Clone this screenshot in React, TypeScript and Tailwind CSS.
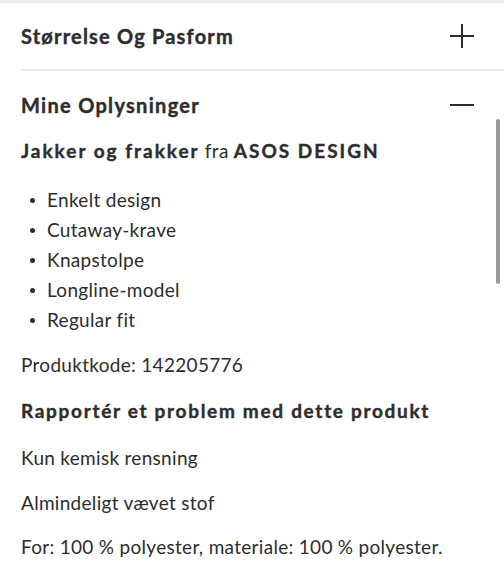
import React from 'react';

const bullets = ['Enkelt design', 'Cutaway-krave', 'Knapstolpe', 'Longline-model', 'Regular fit'];

function PlusIcon() {
  return (
    <svg width="24" height="24" viewBox="0 0 24 24" className="text-[#2d2d2d]">
      <path d="M0 12h24M12 0v24" stroke="currentColor" strokeWidth="2" />
    </svg>
  );
}

function MinusIcon() {
  return (
    <svg width="24" height="24" viewBox="0 0 24 24" className="text-[#2d2d2d]">
      <path d="M0 12h24" stroke="currentColor" strokeWidth="2" />
    </svg>
  );
}

export default function App() {
  return (
    <div className="relative w-[504px] h-[575px] overflow-hidden bg-white text-[#2d2d2d] font-['Lato',sans-serif]">
      <div className="h-[3px] bg-[#eeeeee]" />
      <div className="pl-[21px]">
        <div className="flex h-[68px] items-center justify-between border-b-2 border-[#eeeeee] pr-[30px]">
          <h2 className="text-[20px] font-bold tracking-[1.2px] [-webkit-text-stroke:0.4px]">Størrelse Og Pasform</h2>
          <PlusIcon />
        </div>
        <div className="flex h-[68px] items-center justify-between pr-[30px]">
          <h2 className="text-[20px] font-bold tracking-[1.3px] [-webkit-text-stroke:0.4px]">Mine Oplysninger</h2>
          <MinusIcon />
        </div>

        <div className="pr-[40px]">
          <p className="text-[19px] leading-[24px] tracking-[0.3px] whitespace-nowrap">
            <span className="font-bold tracking-[2px] [-webkit-text-stroke:0.4px]">Jakker og frakker</span> fra{' '}
            <span className="font-bold tracking-[2px] [-webkit-text-stroke:0.4px]">ASOS DESIGN</span>
          </p>

          <ul className="mt-[22px]">
            {bullets.map((b) => (
              <li key={b} className="flex items-center text-[19px] leading-[30px] tracking-[0.3px]">
                <span className="ml-[9px] mr-[12px] h-[5px] w-[5px] rounded-full bg-[#2d2d2d]" />
                {b}
              </li>
            ))}
          </ul>

          <p className="mt-[15px] text-[19px] leading-[30px] tracking-[0.3px]">Produktkode: 142205776</p>
          <p className="mt-[16px] text-[19px] font-bold leading-[30px] tracking-[1.7px] whitespace-nowrap [-webkit-text-stroke:0.4px]">
            Rapportér et problem med dette produkt
          </p>
          <p className="mt-[17px] text-[19px] leading-[30px] tracking-[0.3px]">Kun kemisk rensning</p>
          <p className="mt-[15px] text-[19px] leading-[30px] tracking-[0.3px]">Almindeligt vævet stof</p>
          <p className="mt-[14px] text-[19px] leading-[30px] tracking-[0.3px] whitespace-nowrap">
            For: 100 % polyester, materiale: 100 % polyester.
          </p>
        </div>
      </div>
      <div className="absolute left-[496px] top-[119px] h-[165px] w-[4px] rounded-full bg-[#9a9a9a]" />
    </div>
  );
}
